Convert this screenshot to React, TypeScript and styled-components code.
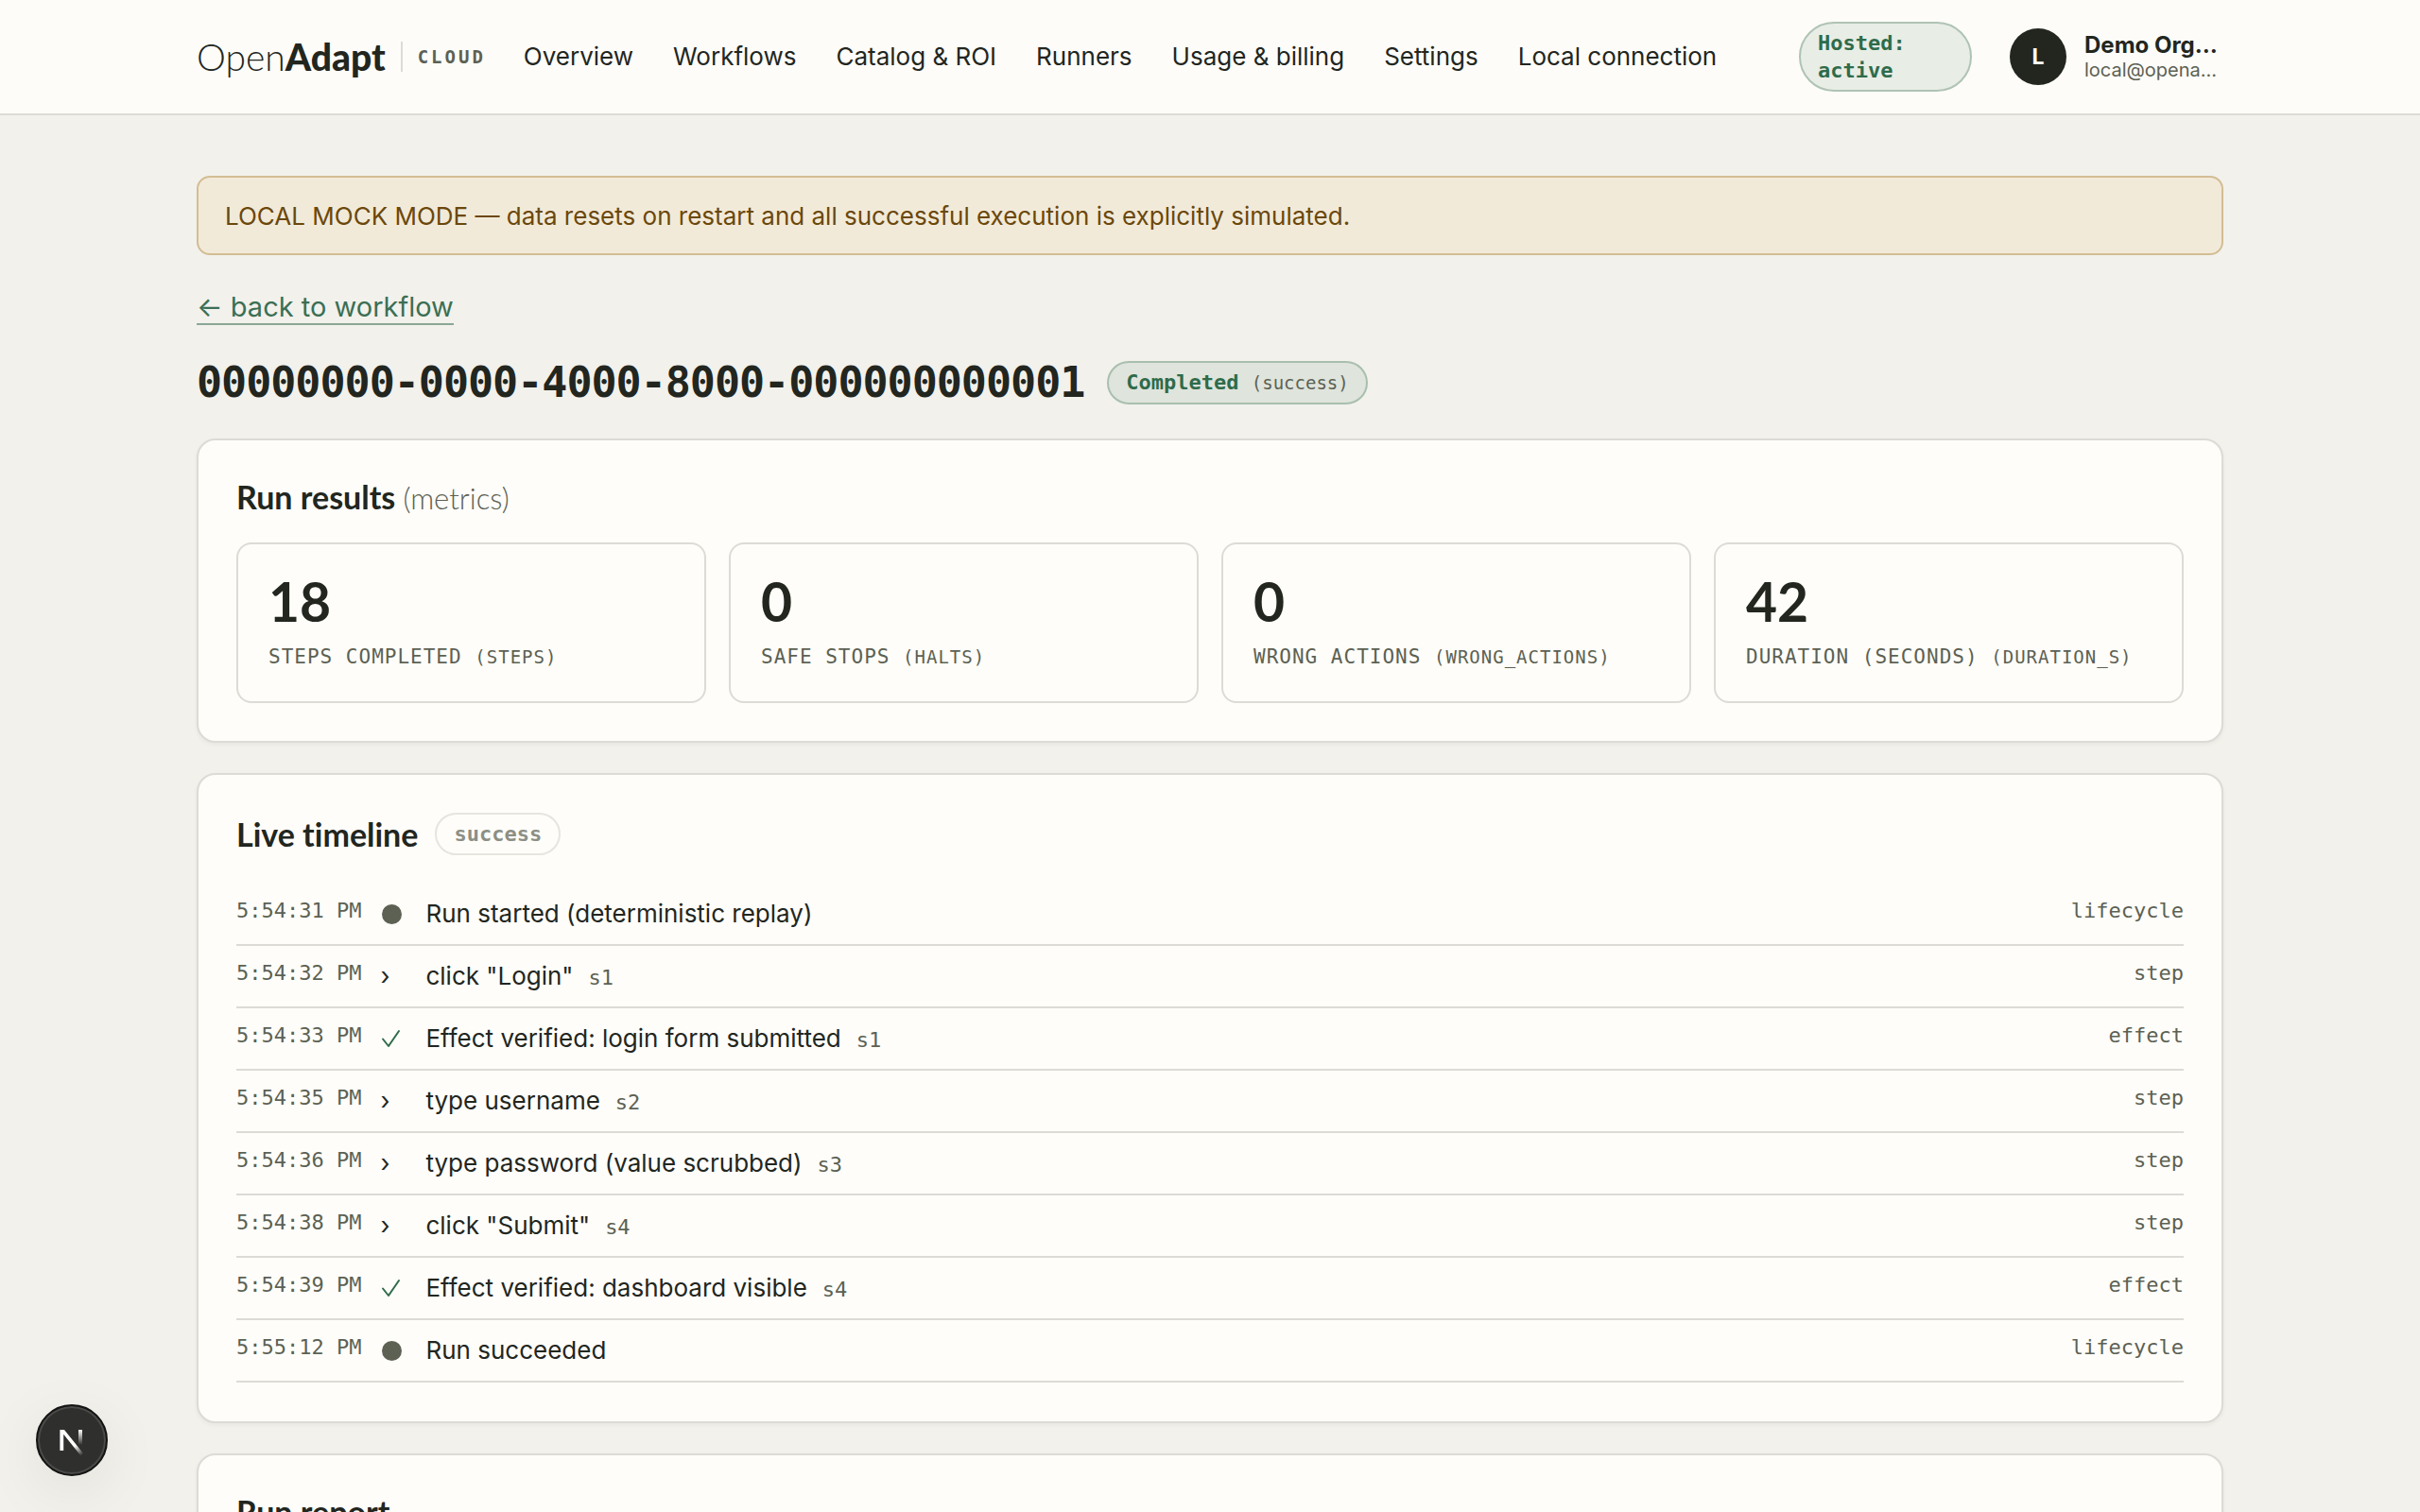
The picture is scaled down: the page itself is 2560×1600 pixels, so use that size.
import React from "react";
import styled, { createGlobalStyle, css } from "styled-components";

const color = {
  page: "#f2f1ec",
  surface: "#fefdf9",
  header: "#fdfcf8",
  line: "#dcdbd5",
  ink: "#22261f",
  muted: "#5c6153",
  green: "#2f6b4a",
};

const sans = `Inter, "Noto Sans", "Liberation Sans", sans-serif`;
const display = `Lato, Inter, sans-serif`;
const mono = `"DejaVu Sans Mono", "Liberation Mono", monospace`;

const GlobalStyle = createGlobalStyle`
  *, *::before, *::after { box-sizing: border-box; }
  body {
    margin: 0;
    background: ${color.page};
    color: ${color.ink};
    font-family: ${sans};
    font-size: 30px;
    line-height: 48px;
    -webkit-font-smoothing: antialiased;
  }
  html { overflow: hidden auto; scrollbar-width: none; }
`;

const Header = styled.header`
  background: ${color.header};
  border-bottom: 2px solid ${color.line};
`;

const HeaderInner = styled.div`
  display: flex;
  align-items: center;
  gap: 40px;
  max-width: 2240px;
  min-height: 120px;
  margin: 0 auto;
  padding: 0 48px;
`;

const Brand = styled.a`
  display: flex;
  align-items: center;
  gap: 16px;
  color: inherit;
  text-decoration: none;
`;

const Wordmark = styled.span`
  font: 300 39px/44px ${display};
`;

const WordmarkStrong = styled.b`
  font-weight: 900;
`;

const BrandTag = styled.span`
  padding-left: 16px;
  border-left: 2px solid ${color.line};
  color: ${color.muted};
  font: 700 19px/32px ${mono};
  letter-spacing: 3px;
`;

const Nav = styled.nav`
  display: flex;
  align-items: center;
  gap: 42px;
`;

const NavLink = styled.a`
  color: inherit;
  font-size: 26px;
  line-height: 40px;
  text-decoration: none;
  white-space: nowrap;
`;

const Account = styled.div`
  display: flex;
  align-items: center;
  gap: 40px;
  margin-left: auto;
`;

const Pill = styled.span<{ $tone?: "green" | "tint" | "plain" }>`
  display: inline-block;
  max-width: 100%;
  padding: 6px 18px;
  border: 2px solid ${color.line};
  border-radius: 38px;
  color: ${color.muted};
  font: 700 22px/29px ${mono};
  ${({ $tone }) =>
    $tone === "green" &&
    css`
      max-width: 183px;
      background: #e8ede5;
      border-color: #afc3b4;
      color: ${color.green};
    `}
  ${({ $tone }) =>
    $tone === "tint" &&
    css`
      background: #dfe4dc;
      border-color: #a9bfae;
      color: ${color.green};
    `}
  ${({ $tone }) =>
    $tone === "plain" &&
    css`
      opacity: 0.7;
    `}
`;

const PillNote = styled.span`
  color: ${color.muted};
  font-size: 19px;
  font-weight: 400;
`;

const User = styled.div`
  display: flex;
  align-items: center;
  gap: 19px;
`;

const Avatar = styled.span`
  display: grid;
  place-items: center;
  width: 60px;
  height: 60px;
  border-radius: 50%;
  background: ${color.ink};
  color: ${color.surface};
  font-size: 23px;
  font-weight: 700;
`;

const UserText = styled.div`
  display: flex;
  flex-direction: column;
  width: 147px;
  white-space: nowrap;
`;

const UserName = styled.span`
  font-size: 24px;
  font-weight: 700;
  line-height: 28px;
`;

const UserMail = styled.span`
  color: ${color.muted};
  font-size: 20px;
  line-height: 24px;
`;

const Main = styled.main`
  max-width: 2240px;
  margin: 0 auto;
  padding: 64px 48px;
`;

const Banner = styled.div`
  padding: 21px 28px 19px;
  border: 2px solid #d3bd94;
  border-radius: 14px;
  background: #f2ead9;
  color: #6b480b;
  font-size: 26px;
  line-height: 40px;
`;

const BackLink = styled.a`
  display: inline-block;
  margin-top: 38px;
  border-bottom: 2px solid #8ba796;
  color: #3b6f54;
  font-size: 29px;
  line-height: 34px;
  text-decoration: none;
`;

const TitleRow = styled.div`
  display: flex;
  align-items: center;
  gap: 24px;
  margin: 29px 0 31px;
`;

const Title = styled.h1`
  margin: 0;
  font: 700 45px/56px ${mono};
  letter-spacing: -1px;
`;

const Card = styled.section`
  margin-bottom: 32px;
  padding: 40px;
  border: 2px solid ${color.line};
  border-radius: 20px;
  background: ${color.surface};
  box-shadow: 0 2px 4px rgba(34, 38, 31, 0.05);
`;

const CardHead = styled.div`
  display: flex;
  align-items: center;
  gap: 18px;
  margin-bottom: 28px;
`;

const CardTitle = styled.h2`
  margin: 0;
  font: 700 34px/40px ${display};
  font-variant-ligatures: none;
`;

const TitleNote = styled.span`
  color: ${color.muted};
  font-size: 31px;
  font-weight: 300;
  line-height: 1;
`;

const Stats = styled.dl`
  display: grid;
  grid-template-columns: repeat(4, 1fr);
  gap: 24px;
  margin: 0;
`;

const Stat = styled.div`
  display: flex;
  flex-direction: column-reverse;
  gap: 16px;
  padding: 32px;
  border: 2px solid ${color.line};
  border-radius: 16px;
`;

const StatValue = styled.dd`
  margin: 0;
  font: 700 57px/56px ${display};
`;

const StatLabel = styled.dt`
  color: ${color.muted};
  font: 400 21px/30px ${mono};
  letter-spacing: 1px;
  text-transform: uppercase;
  white-space: nowrap;
`;

const StatKey = styled.span`
  font-size: 19px;
  line-height: 1;
`;

const Timeline = styled.ol`
  margin: 0;
  padding: 2px 0 1px;
  list-style: none;
`;

const Event = styled.li`
  display: grid;
  grid-template-columns: auto 28px 1fr auto;
  column-gap: 20px;
  padding: 12px 0;
  border-bottom: 2px solid ${color.line};
  font-size: 26px;
  line-height: 40px;
`;

const Meta = styled.span`
  color: ${color.muted};
  font: 400 22px/34px ${mono};
`;

const StepId = styled.span`
  margin-left: 16px;
  color: ${color.muted};
  font-family: ${mono};
  font-size: 22px;
  line-height: 1;
`;

const Marker = styled.span`
  display: flex;
  align-items: center;
  height: 40px;
`;

const Dot = styled.span`
  width: 21px;
  height: 21px;
  margin-left: 2px;
  border-radius: 50%;
  background: ${color.muted};
`;

const DevButton = styled.button`
  position: fixed;
  left: 38px;
  bottom: 38px;
  width: 76px;
  height: 76px;
  padding: 0;
  border: 2px solid #141414;
  border-radius: 50%;
  background: #2f2f2d;
  box-shadow: inset 0 0 0 2px #4b4b4a, 0 16px 64px rgba(0, 0, 0, 0.08);
`;

const navItems = [
  "Overview",
  "Workflows",
  "Catalog & ROI",
  "Runners",
  "Usage & billing",
  "Settings",
  "Local connection",
];

const stats = [
  { value: "18", label: "Steps completed", key: "steps" },
  { value: "0", label: "Safe stops", key: "halts" },
  { value: "0", label: "Wrong actions", key: "wrong_actions" },
  { value: "42", label: "Duration (seconds)", key: "duration_s" },
];

type Kind = "lifecycle" | "step" | "effect";

const events: { time: string; kind: Kind; text: string; step?: string }[] = [
  { time: "5:54:31 PM", kind: "lifecycle", text: "Run started (deterministic replay)" },
  { time: "5:54:32 PM", kind: "step", text: 'click "Login"', step: "s1" },
  { time: "5:54:33 PM", kind: "effect", text: "Effect verified: login form submitted", step: "s1" },
  { time: "5:54:35 PM", kind: "step", text: "type username", step: "s2" },
  { time: "5:54:36 PM", kind: "step", text: "type password (value scrubbed)", step: "s3" },
  { time: "5:54:38 PM", kind: "step", text: 'click "Submit"', step: "s4" },
  { time: "5:54:39 PM", kind: "effect", text: "Effect verified: dashboard visible", step: "s4" },
  { time: "5:55:12 PM", kind: "lifecycle", text: "Run succeeded" },
];

function EventMarker({ kind }: { kind: Kind }) {
  if (kind === "lifecycle") return <Marker><Dot /></Marker>;
  if (kind === "step") return <Marker>›</Marker>;
  return (
    <Marker>
      <svg width="22" height="22" viewBox="0 0 22 22" fill="none" aria-label="verified">
        <path d="M3 11.5 L9 19 L20 3" stroke={color.green} strokeWidth="2" strokeLinecap="round" strokeLinejoin="round" />
      </svg>
    </Marker>
  );
}

function NextLogo() {
  return (
    <svg width="72" height="72" viewBox="0 0 72 72" fill="none" aria-hidden="true">
      <defs>
        <linearGradient id="diag" gradientUnits="userSpaceOnUse" x1="40" y1="41" x2="48" y2="51">
          <stop stopColor="#fff" />
          <stop offset="1" stopColor="#fff" stopOpacity="0" />
        </linearGradient>
        <linearGradient id="stem" gradientUnits="userSpaceOnUse" x1="45" y1="25" x2="45" y2="41">
          <stop stopColor="#fff" />
          <stop offset="1" stopColor="#fff" stopOpacity="0" />
        </linearGradient>
      </defs>
      <path d="M23.4 25 H28 L48.500 50.500 L45.500 52.500 L27.200 29.800 V47 H23.400 Z" fill="url(#diag)" />
      <rect x="43" y="25" width="4" height="16" fill="url(#stem)" />
    </svg>
  );
}

export default function App() {
  return (
    <>
      <GlobalStyle />
      <Header>
        <HeaderInner>
          <Brand href="#">
            <Wordmark>Open<WordmarkStrong>Adapt</WordmarkStrong></Wordmark>
            <BrandTag>CLOUD</BrandTag>
          </Brand>
          <Nav>
            {navItems.map((item) => (
              <NavLink key={item} href="#">{item}</NavLink>
            ))}
          </Nav>
          <Account>
            <Pill $tone="green">Hosted: active</Pill>
            <User>
              <Avatar>L</Avatar>
              <UserText>
                <UserName>Demo Org…</UserName>
                <UserMail>local@opena…</UserMail>
              </UserText>
            </User>
          </Account>
        </HeaderInner>
      </Header>
      <Main>
        <Banner role="status">
          LOCAL MOCK MODE — data resets on restart and all successful execution is explicitly simulated.
        </Banner>
        <BackLink href="#">← back to workflow</BackLink>
        <TitleRow>
          <Title>00000000-0000-4000-8000-000000000001</Title>
          <Pill $tone="tint">Completed <PillNote>(success)</PillNote></Pill>
        </TitleRow>
        <Card>
          <CardHead>
            <CardTitle>Run results <TitleNote>(metrics)</TitleNote></CardTitle>
          </CardHead>
          <Stats>
            {stats.map((s) => (
              <Stat key={s.key}>
                <StatLabel>{s.label} <StatKey>({s.key})</StatKey></StatLabel>
                <StatValue>{s.value}</StatValue>
              </Stat>
            ))}
          </Stats>
        </Card>
        <Card>
          <CardHead>
            <CardTitle>Live timeline</CardTitle>
            <Pill $tone="plain">success</Pill>
          </CardHead>
          <Timeline>
            {events.map((e) => (
              <Event key={e.time}>
                <Meta>{e.time}</Meta>
                <EventMarker kind={e.kind} />
                <span>{e.text}{e.step && <StepId>{e.step}</StepId>}</span>
                <Meta>{e.kind}</Meta>
              </Event>
            ))}
          </Timeline>
        </Card>
        <Card>
          <CardHead>
            <CardTitle>Run report</CardTitle>
          </CardHead>
        </Card>
      </Main>
      <DevButton type="button" aria-label="Open developer tools"><NextLogo /></DevButton>
    </>
  );
}
